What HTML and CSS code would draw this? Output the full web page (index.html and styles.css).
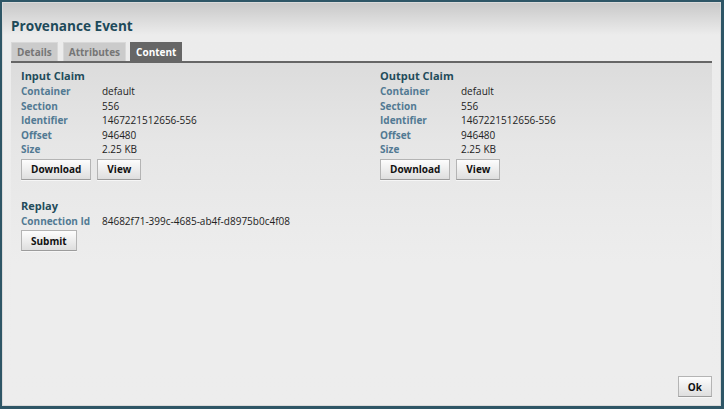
FILE: index.html
```html
<!DOCTYPE html>
<html>
<head>
<meta charset="utf-8">
<link rel="stylesheet" href="styles.css">
</head>
<body>
<div class="dialog">
  <div class="header">
    <div class="title">Provenance Event</div>
    <div class="tabs">
      <div class="tab">Details</div>
      <div class="tab">Attributes</div>
      <div class="tab active">Content</div>
    </div>
  </div>
  <div class="panel">
    <div class="claims">
      <div class="claim">
        <div class="heading">Input Claim</div>
        <div class="row"><span class="label">Container</span><span class="value">default</span></div>
        <div class="row"><span class="label">Section</span><span class="value">556</span></div>
        <div class="row"><span class="label">Identifier</span><span class="value">1467221512656-556</span></div>
        <div class="row"><span class="label">Offset</span><span class="value">946480</span></div>
        <div class="row"><span class="label">Size</span><span class="value">2.25 KB</span></div>
        <div class="buttons"><button class="btn">Download</button><button class="btn">View</button></div>
      </div>
      <div class="claim">
        <div class="heading">Output Claim</div>
        <div class="row"><span class="label">Container</span><span class="value">default</span></div>
        <div class="row"><span class="label">Section</span><span class="value">556</span></div>
        <div class="row"><span class="label">Identifier</span><span class="value">1467221512656-556</span></div>
        <div class="row"><span class="label">Offset</span><span class="value">946480</span></div>
        <div class="row"><span class="label">Size</span><span class="value">2.25 KB</span></div>
        <div class="buttons"><button class="btn">Download</button><button class="btn">View</button></div>
      </div>
    </div>
    <div class="replay">
      <div class="heading">Replay</div>
      <div class="row"><span class="label">Connection Id</span><span class="value">84682f71-399c-4685-ab4f-d8975b0c4f08</span></div>
      <div class="buttons"><button class="btn">Submit</button></div>
    </div>
  </div>
  <div class="footer"><button class="btn">Ok</button></div>
</div>
</body>
</html>
```

FILE: styles.css
```css
html, body {
  margin: 0;
  height: 100%;
}
body {
  background: #2e5666;
  padding: 2px 3px 3px 2px;
  box-sizing: border-box;
  font-family: "Open Sans", "DejaVu Sans", sans-serif;
}
.dialog {
  height: 100%;
  box-sizing: border-box;
  border: 1px solid #dadada;
  background: linear-gradient(#c9c9c9 0, #ececec 32px, #ededed 100%);
  display: flex;
  flex-direction: column;
  padding: 0 8px 8px 8px;
}
.header {
  padding-top: 14px;
}
.title {
  font-size: 13.6px;
  font-weight: bold;
  line-height: 18px;
  color: #1d4a5a;
  margin-bottom: 7px;
}
.tabs {
  display: flex;
  gap: 5px;
}
.tab {
  font-size: 10px;
  font-weight: bold;
  line-height: 18px;
  padding: 0 5px;
  background: #cbcbcb;
  color: #767676;
  border: 1px solid #d8d8d8;
  border-bottom: none;
  height: 18px;
}
.tab.active {
  background: #666;
  color: #fff;
  border-color: #666;
  margin-left: -1px;
}
.panel {
  flex: 1;
  border-top: 2px solid #666;
  background: linear-gradient(#dcdcdc 0, #e6e6e6 80px, #ededed 200px);
  padding: 5px 10px 0 10px;
}
.claims {
  display: grid;
  grid-template-columns: 359px 1fr;
}
.heading {
  font-size: 11px;
  font-weight: bold;
  color: #234c5b;
  line-height: 16px;
}
.row {
  display: flex;
  font-size: 10px;
  line-height: 14.5px;
}
.label {
  width: 81px;
  flex: none;
  font-weight: bold;
  color: #527a93;
}
.value {
  color: #222;
}
.buttons {
  display: flex;
  gap: 6px;
  margin-top: 2px;
}
.btn {
  font-family: "Open Sans", "DejaVu Sans", sans-serif;
  font-size: 10px;
  font-weight: bold;
  color: #111;
  height: 21px;
  padding: 0 9px;
  border: 1px solid #b4b4b4;
  border-bottom-color: #9c9c9c;
  border-radius: 0;
  background: linear-gradient(#fdfdfd, #dedede);
  box-shadow: 0 1px 0 #f6f6f6;
  margin: 0;
}
.replay {
  margin-top: 18px;
}
.replay .buttons {
  margin-top: 2px;
}
.footer {
  display: flex;
  justify-content: flex-end;
}
```
